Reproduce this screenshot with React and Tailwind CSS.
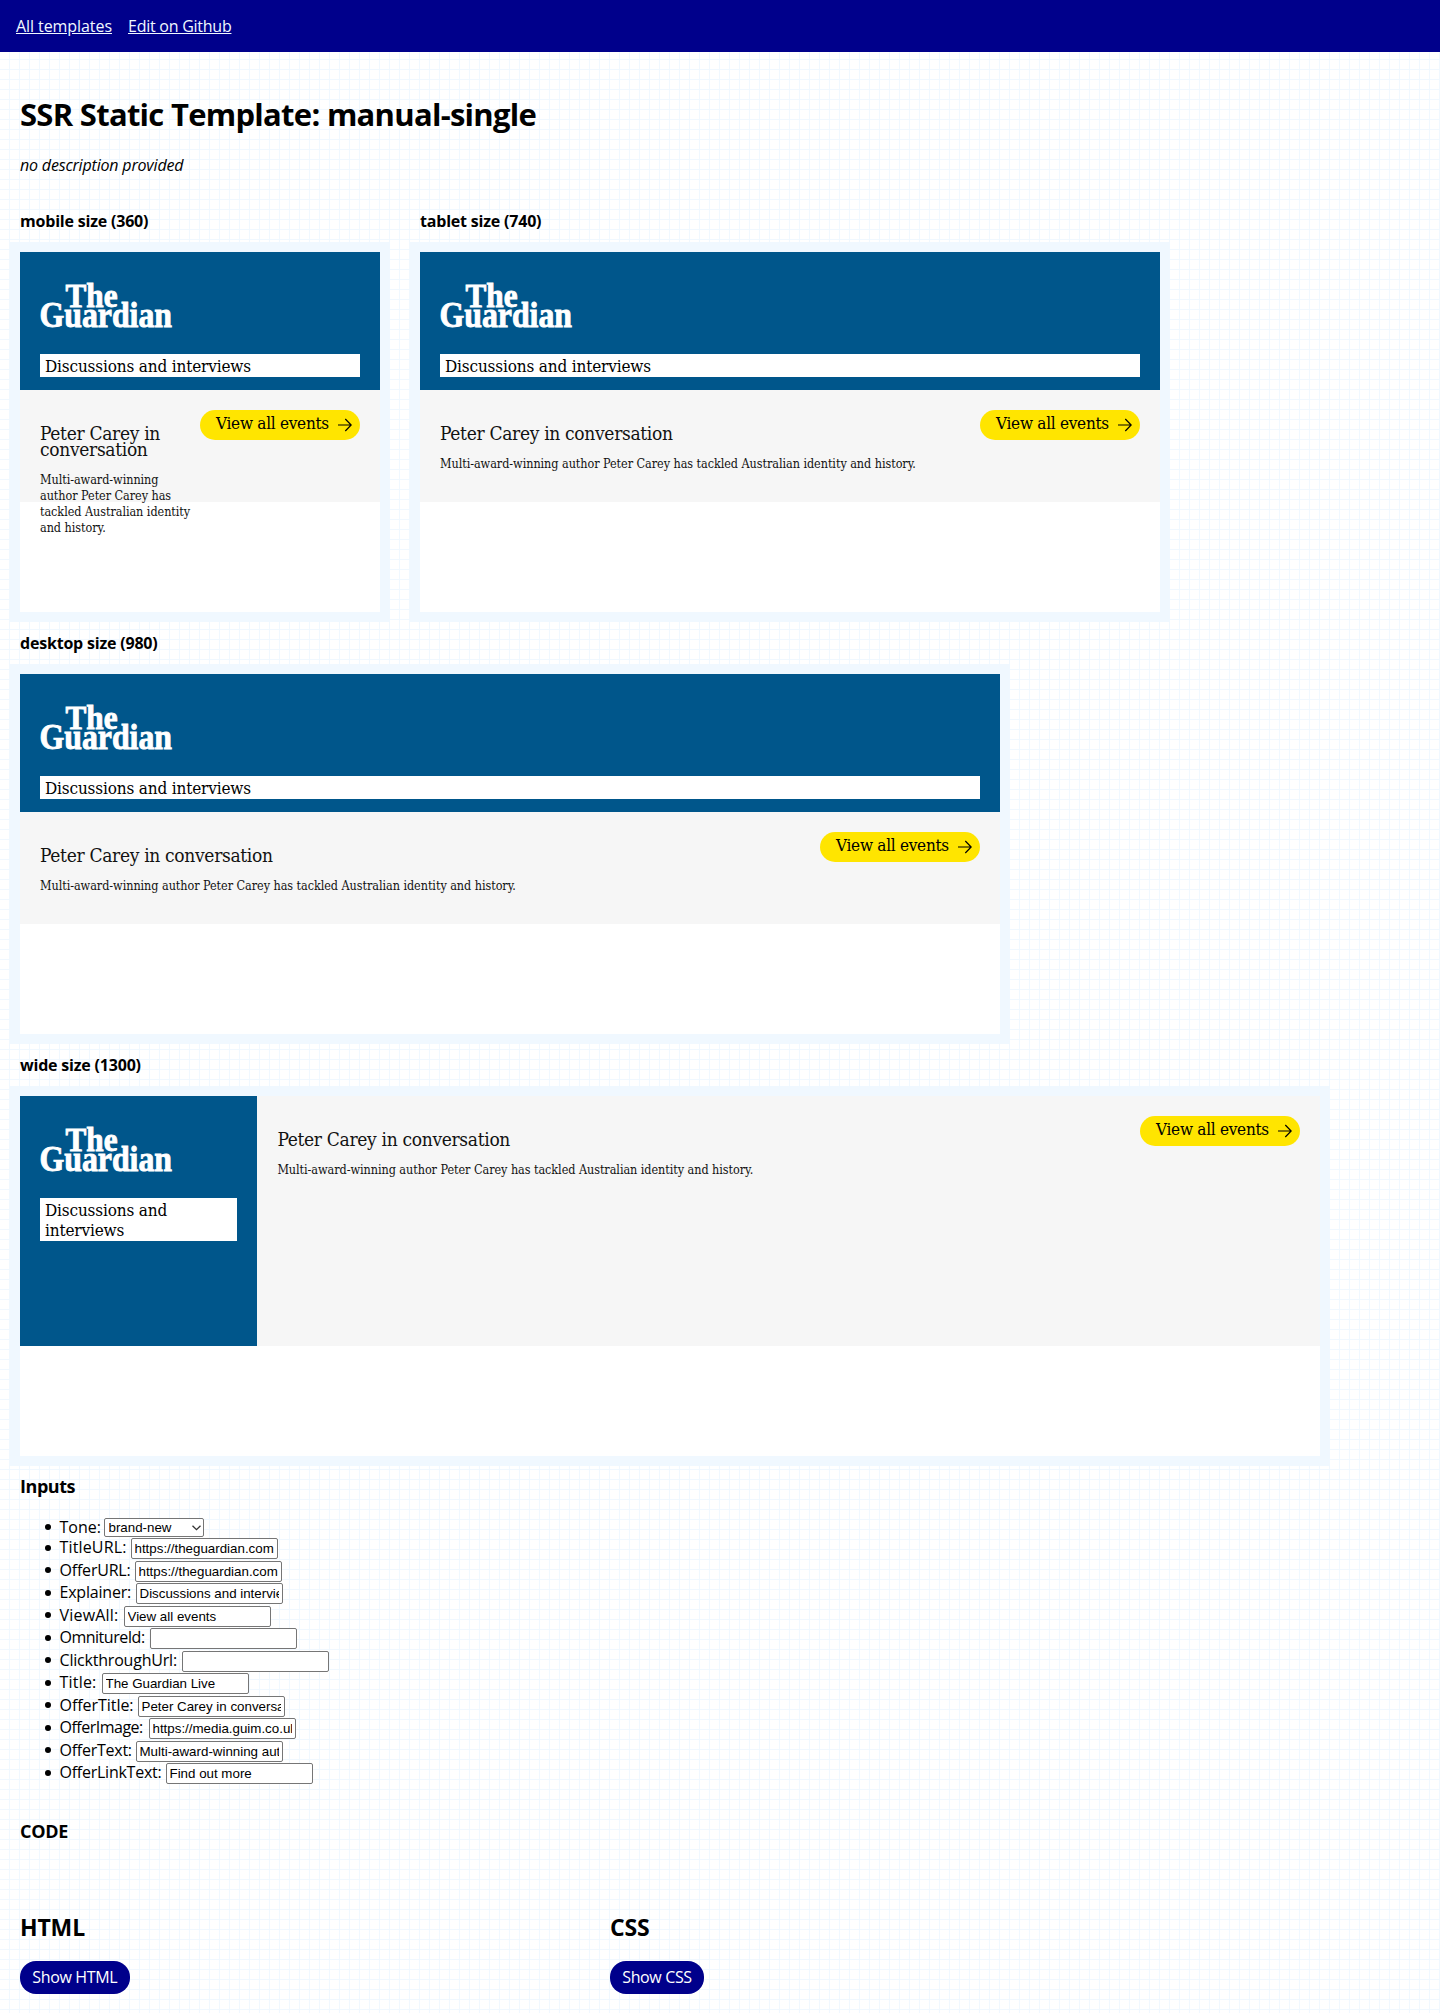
import React from 'react';

function Logo() {
  return (
    <svg width="134" height="46" viewBox="0 0 134 46" className="block overflow-visible" fill="#fff" aria-label="The Guardian">
      <g fontFamily="Liberation Serif, serif" fontWeight="700" stroke="#fff" strokeWidth="0.9">
        <text x="25.5" y="23" fontSize="33" textLength="52" lengthAdjust="spacingAndGlyphs">The</text>
        <text x="-0.5" y="43" fontSize="35" textLength="132.5" lengthAdjust="spacingAndGlyphs">Guardian</text>
      </g>
    </svg>
  );
}

function Arrow() {
  return (
    <svg width="14" height="14" viewBox="0 0 14 14" fill="none" stroke="#000" strokeWidth="1.2" className="block">
      <path d="M0 7H13M7.3 1L13.2 7L7.3 13" />
    </svg>
  );
}

function CallToAction() {
  return (
    <a className="flex h-[30px] w-[160.5px] shrink-0 items-center justify-between rounded-full bg-[#ffe500] pr-[8.5px] pl-[16.5px] text-black">
      <span className="-mt-[3px] text-[17px] leading-[24px] tracking-[-0.27px] whitespace-nowrap">View all events</span>
      <Arrow />
    </a>
  );
}

function Preview({ label, frame, wide, narrow }) {
  return (
    <section className="h-[422px]">
      <h4 className="h-[40px] text-[16px] leading-[19px] font-bold tracking-[-0.2px]">{label}</h4>
      <div className={`${frame} h-[360px] bg-white font-["DejaVu_Serif_Condensed","DejaVu_Serif",serif] outline-[10px] outline-[#f0f8ff] outline-solid`}>
        <div className={wide ? 'flex h-[250px]' : 'flex h-[250px] flex-col'}>
          <div className={wide ? 'w-[237.4px] bg-[#00568b] px-5 pt-8' : 'h-[138px] bg-[#00568b] px-5 pt-8'}>
            <Logo />
            <p className="mt-6 bg-white px-[5px] pt-[2px] pb-[1.5px] text-[17px] leading-[20px] tracking-[-0.16px] text-black">
              Discussions and interviews
            </p>
          </div>
          <div className={wide ? 'flex flex-1 items-start justify-between bg-[#f6f6f6] p-5' : 'flex h-[112px] items-start justify-between bg-[#f6f6f6] p-5'}>
            <div className={narrow ? 'w-[155px] pt-[15px] text-[#121212]' : 'pt-[15px] text-[#121212]'}>
              <h2 className="text-[19px] leading-[16px] tracking-[-0.32px]">Peter Carey in conversation</h2>
              <p className="mt-[15px] text-[12.5px] leading-[16px] tracking-[-0.05px]">
                Multi-award-winning author Peter Carey has tackled Australian identity and history.
              </p>
            </div>
            <CallToAction />
          </div>
        </div>
      </div>
    </section>
  );
}

const fields = [
  ['TitleURL:', 'https://theguardian.com', 'w-[71px] tracking-[0.15px]'],
  ['OfferURL:', 'https://theguardian.com', 'w-[75px] tracking-[-0.2px]'],
  ['Explainer:', 'Discussions and interviews', 'w-[76px] tracking-[-0.2px]'],
  ['ViewAll:', 'View all events', 'w-[64px] tracking-[0.2px]'],
  ['OmnitureId:', '', 'w-[90px] tracking-[-0.5px]'],
  ['ClickthroughUrl:', '', 'w-[122px] tracking-[-0.2px]'],
  ['Title:', 'The Guardian Live', 'w-[42px] tracking-[0.2px]'],
  ['OfferTitle:', 'Peter Carey in conversation', 'w-[78px] tracking-[-0.05px]'],
  ['OfferImage:', 'https://media.guim.co.uk/', 'w-[89px] tracking-[-0.5px]'],
  ['OfferText:', 'Multi-award-winning author Peter Carey', 'w-[76px] tracking-[-0.25px]'],
  ['OfferLinkText:', 'Find out more', 'w-[106px] tracking-[-0.25px]'],
];

function Bullet() {
  return <span className="mt-[6.5px] mr-[9px] size-[6px] shrink-0 rounded-full bg-black" />;
}

export default function App() {
  return (
    <div className='min-h-[2013px] w-full bg-white bg-[linear-gradient(to_right,transparent_9px,#f0f8ff_9px),linear-gradient(to_bottom,transparent_9px,#f0f8ff_9px)] bg-[size:10px_10px] font-["Open_Sans","Noto_Sans",sans-serif] text-[16px] text-black'>
      <header className="flex h-[51.5px] items-center gap-4 bg-[#00008b] px-4 leading-[24px] text-[#f0f8ff]">
        <a className="tracking-[-0.07px] underline">All templates</a>
        <a className="tracking-[-0.25px] underline">Edit on Github</a>
      </header>
      <main className="px-5">
        <h1 className="pt-[39px] text-[31px] leading-[46px] font-bold tracking-[-0.72px]">SSR Static Template: manual-single</h1>
        <p className="mt-[16px] h-[59px] leading-[24px] tracking-[-0.18px] italic">no description provided</p>
        <div className="flex gap-10">
          <Preview label="mobile size (360)" frame="w-[360px]" narrow />
          <Preview label="tablet size (740)" frame="w-[740px]" />
        </div>
        <Preview label="desktop size (980)" frame="w-[980px]" />
        <Preview label="wide size (1300)" frame="w-[1300px]" wide />

        <h3 className="-mt-[6px] text-[18px] leading-[28px] font-bold tracking-[-0.45px]">Inputs</h3>
        <ul className="mt-[18px] pl-[24.5px] tracking-[-0.2px]">
          <li className="flex h-[20.5px] items-start">
            <Bullet />
            <label className="w-[44px] leading-[18px] tracking-normal">Tone:</label>
            <div className="relative h-[19px] w-[100px]">
              <select className='block h-full w-full appearance-none rounded-[2px] border border-[#767676] bg-white pl-[4px] font-["Liberation_Sans",Arial,sans-serif] text-[13.33px] leading-[17px] tracking-normal'>
                <option>brand-new</option>
              </select>
              <svg width="9" height="6" viewBox="0 0 9 6" fill="none" stroke="#333" strokeWidth="1.3" className="pointer-events-none absolute top-[7px] right-[3px]">
                <path d="M0.5 0.7L4.5 4.7L8.5 0.7" />
              </svg>
            </div>
          </li>
          {fields.map(([name, value, labelStyle]) => (
            <li key={name} className="flex h-[22.5px] items-start">
              <Bullet />
              <label className={`${labelStyle} shrink-0 leading-[18px] whitespace-nowrap`}>{name}</label>
              <input
                defaultValue={value}
                className='h-[21px] w-[147px] rounded-[2px] border border-[#767676] bg-white px-[3px] font-["Liberation_Sans",Arial,sans-serif] text-[13.33px] tracking-normal'
              />
            </li>
          ))}
        </ul>
        <h3 className="mt-[31px] text-[18px] leading-[28px] font-bold tracking-[-0.3px]">CODE</h3>
        <div className="mt-[64px] flex">
          <section className="w-[590px]">
            <h2 className="text-[23px] leading-[36px] font-bold tracking-[-0.15px]">HTML</h2>
            <button className="mt-[16px] h-[33px] w-[109.5px] rounded-[16px] bg-[#00008b] pb-[1px] leading-[24px] tracking-[-0.35px] text-white">Show HTML</button>
          </section>
          <section>
            <h2 className="text-[23px] leading-[36px] font-bold tracking-[-0.15px]">CSS</h2>
            <button className="mt-[16px] h-[33px] w-[94px] rounded-[16px] bg-[#00008b] pb-[1px] leading-[24px] tracking-[-0.35px] text-white">Show CSS</button>
          </section>
        </div>
      </main>
    </div>
  );
}
